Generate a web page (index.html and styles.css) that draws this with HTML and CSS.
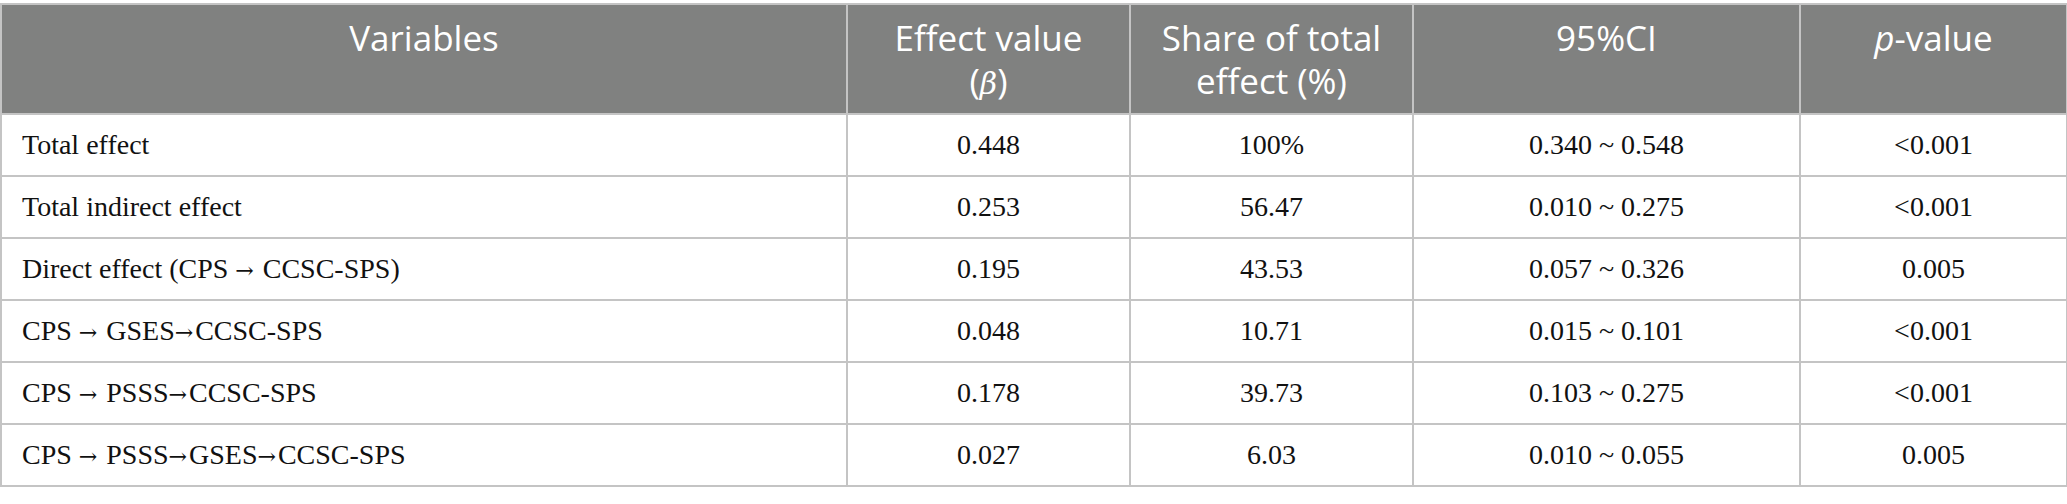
FILE: index.html
```html
<!DOCTYPE html>
<html>
<head>
<meta charset="utf-8">
<link rel="stylesheet" href="styles.css">
</head>
<body>
<table class="tbl">
  <colgroup>
    <col class="c1"><col class="c2"><col class="c3"><col class="c4"><col class="c5">
  </colgroup>
  <thead>
    <tr>
      <th>Variables</th>
      <th>Effect value<br>(<span class="beta">β</span>)</th>
      <th>Share of total<br>effect (%)</th>
      <th>95%CI</th>
      <th><i>p</i>-value</th>
    </tr>
  </thead>
  <tbody>
    <tr><td class="lbl">Total effect</td><td>0.448</td><td>100%</td><td>0.340 ~ 0.548</td><td>&lt;0.001</td></tr>
    <tr><td class="lbl">Total indirect effect</td><td>0.253</td><td>56.47</td><td>0.010 ~ 0.275</td><td>&lt;0.001</td></tr>
    <tr><td class="lbl">Direct effect (CPS <span class="ar">→</span> CCSC-SPS)</td><td>0.195</td><td>43.53</td><td>0.057 ~ 0.326</td><td>0.005</td></tr>
    <tr><td class="lbl">CPS <span class="ar">→</span> GSES<span class="ar">→</span>CCSC-SPS</td><td>0.048</td><td>10.71</td><td>0.015 ~ 0.101</td><td>&lt;0.001</td></tr>
    <tr><td class="lbl">CPS <span class="ar">→</span> PSSS<span class="ar">→</span>CCSC-SPS</td><td>0.178</td><td>39.73</td><td>0.103 ~ 0.275</td><td>&lt;0.001</td></tr>
    <tr><td class="lbl">CPS <span class="ar">→</span> PSSS<span class="ar">→</span>GSES<span class="ar">→</span>CCSC-SPS</td><td>0.027</td><td>6.03</td><td>0.010 ~ 0.055</td><td>0.005</td></tr>
  </tbody>
</table>
</body>
</html>
```
FILE: styles.css
```css
html, body {
  margin: 0;
  padding: 0;
  background: #ffffff;
}
body {
  padding-top: 3px;
}
.tbl {
  border-collapse: collapse;
  table-layout: fixed;
  width: 2066px;
  border: 2px solid #c4c4c4;
}
.c1 { width: 846px; }
.c2 { width: 283px; }
.c3 { width: 283px; }
.c4 { width: 387px; }
.c5 { width: 267px; }
.tbl th {
  background: #808180;
  color: #ffffff;
  font-family: "Open Sans", "Noto Sans", sans-serif;
  font-weight: 400;
  font-size: 35px;
  line-height: 43px;
  height: 110px;
  box-sizing: border-box;
  padding: 11px 8px 0;
  vertical-align: top;
  text-align: center;
  border: 2px solid #c4c4c4;
}
.tbl th .beta {
  font-family: "DejaVu Serif", serif;
  font-style: italic;
  font-size: 30px;
}
.tbl td {
  font-family: "Liberation Serif", "Times New Roman", serif;
  font-size: 28px;
  color: #111111;
  height: 60px;
  padding: 0 8px;
  text-align: center;
  vertical-align: middle;
  border: 2px solid #c4c4c4;
}
.tbl td.lbl {
  text-align: left;
  padding-left: 20px;
}
.tbl td .ar {
  font-family: "DejaVu Serif", serif;
  font-size: 22px;
  margin-right: 2px;
}
```
